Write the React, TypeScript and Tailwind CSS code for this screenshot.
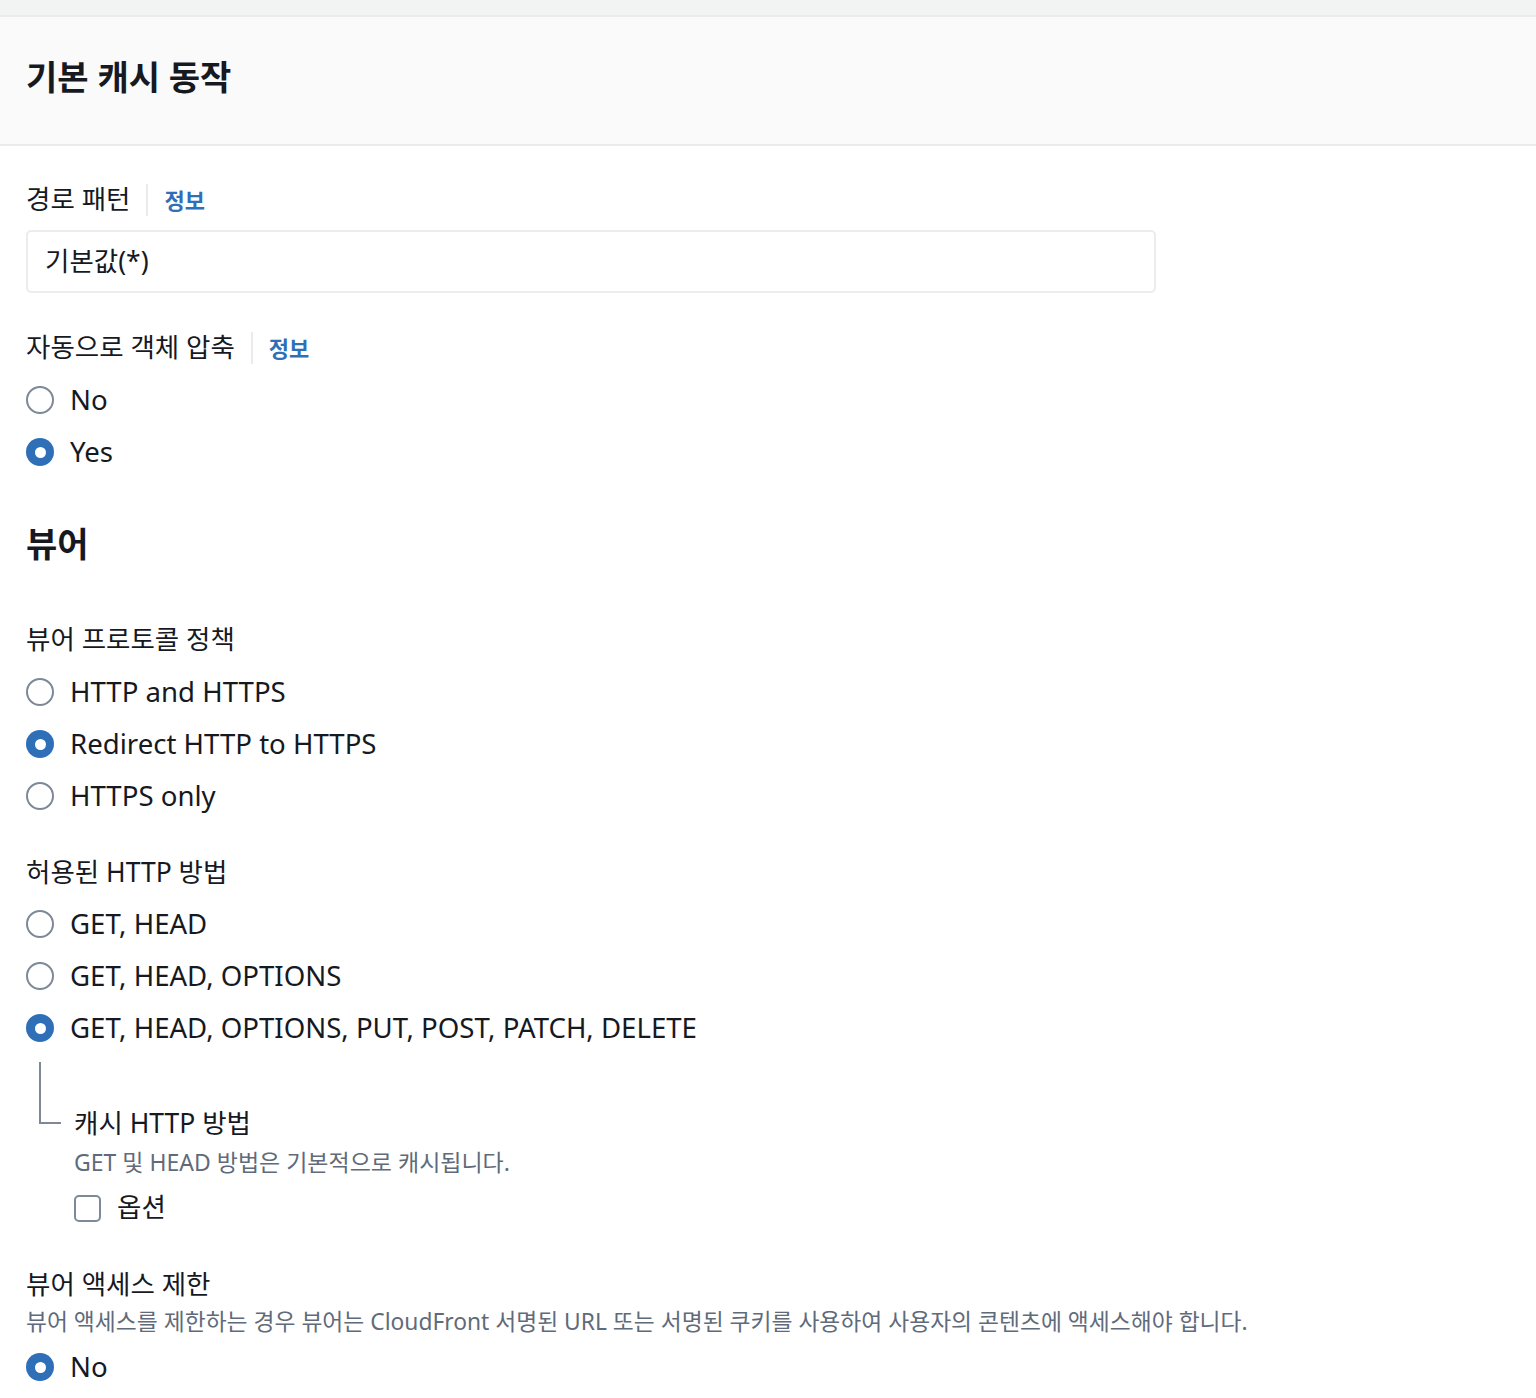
const font = { fontFamily: '"Noto Sans", "Noto Sans CJK KR", sans-serif' };

type Option = { label: string; checked?: boolean };

function Radio({ checked }: { checked?: boolean }) {
  return checked ? (
    <span className="flex h-[28px] w-[28px] shrink-0 items-center justify-center rounded-full bg-[#2f6fb7]">
      <span className="h-[11px] w-[11px] rounded-full bg-white" />
    </span>
  ) : (
    <span className="h-[28px] w-[28px] shrink-0 rounded-full border-[2.5px] border-[#7d8998] bg-white" />
  );
}

function RadioGroup({ options }: { options: Option[] }) {
  return (
    <div className="flex flex-col">
      {options.map((o) => (
        <div key={o.label} className="flex h-[52px] items-center gap-[16px]">
          <Radio checked={o.checked} />
          <span className="text-[27.6px] text-[#16191f]">{o.label}</span>
        </div>
      ))}
    </div>
  );
}

function Label({ text, info }: { text: string; info?: boolean }) {
  return (
    <div className="flex h-[36px] items-center text-[26.5px] text-[#16191f]">
      <span>{text}</span>
      {info && (
        <>
          <span className="mx-[16px] h-[32px] w-[2px] bg-[#e9ebed]" />
          <span className="text-[22px] font-bold text-[#2f6fb7]">정보</span>
        </>
      )}
    </div>
  );
}

export default function App() {
  return (
    <div className="min-h-[1398px] w-[1536px] bg-white" style={font}>
      <div className="h-[17px] border-b-2 border-[#e9ebed] bg-[#f2f3f3]" />
      <div className="flex h-[129px] items-center border-b-2 border-[#e9ebed] bg-[#fafafa] px-[26px] pb-[6px]">
        <h1 className="text-[34px] font-bold text-[#16191f]">기본 캐시 동작</h1>
      </div>

      <div className="px-[26px] pt-[36px]">
        <Label text="경로 패턴" info />
        <div className="mt-[12px] flex h-[63px] w-[1130px] items-center rounded-[5px] border-2 border-[#eaeded] px-[17px] text-[26.5px] text-[#16191f]">
          기본값(*)
        </div>

        <div className="mt-[37px]">
          <Label text="자동으로 객체 압축" info />
        </div>
        <div className="mt-[8px]">
          <RadioGroup options={[{ label: "No" }, { label: "Yes", checked: true }]} />
        </div>

        <h2 className="mt-[41px] text-[34px] font-bold text-[#16191f]">뷰어</h2>

        <div className="mt-[52px]">
          <Label text="뷰어 프로토콜 정책" />
        </div>
        <div className="mt-[8px]">
          <RadioGroup
            options={[
              { label: "HTTP and HTTPS" },
              { label: "Redirect HTTP to HTTPS", checked: true },
              { label: "HTTPS only" },
            ]}
          />
        </div>

        <div className="mt-[33px]">
          <Label text="허용된 HTTP 방법" />
        </div>
        <div className="mt-[7px]">
          <RadioGroup
            options={[
              { label: "GET, HEAD" },
              { label: "GET, HEAD, OPTIONS" },
              { label: "GET, HEAD, OPTIONS, PUT, POST, PATCH, DELETE", checked: true },
            ]}
          />
        </div>

        <div className="mt-[8px] flex">
          <div className="ml-[13px] h-[62px] w-[22px] border-b-2 border-l-2 border-[#7d8998]" />
          <div className="ml-[13px] mt-[42px] flex flex-col">
            <span className="text-[26.5px] text-[#16191f]">캐시 HTTP 방법</span>
            <span className="mt-[1px] text-[23px] text-[#5f6b7a]">
              GET 및 HEAD 방법은 기본적으로 캐시됩니다.
            </span>
            <div className="mt-[9px] flex items-center gap-[16px]">
              <span className="h-[27px] w-[27px] rounded-[5px] border-2 border-[#7d8998]" />
              <span className="text-[26.5px] text-[#16191f]">옵션</span>
            </div>
          </div>
        </div>

        <div className="mt-[39px]">
          <Label text="뷰어 액세스 제한" />
        </div>
        <div className="mt-[2px] text-[22.8px] text-[#5f6b7a]">
          뷰어 액세스를 제한하는 경우 뷰어는 CloudFront 서명된 URL 또는 서명된 쿠키를 사용하여 사용자의 콘텐츠에 액세스해야 합니다.
        </div>
        <div className="mt-[2px]">
          <RadioGroup options={[{ label: "No", checked: true }]} />
        </div>
      </div>
    </div>
  );
}
